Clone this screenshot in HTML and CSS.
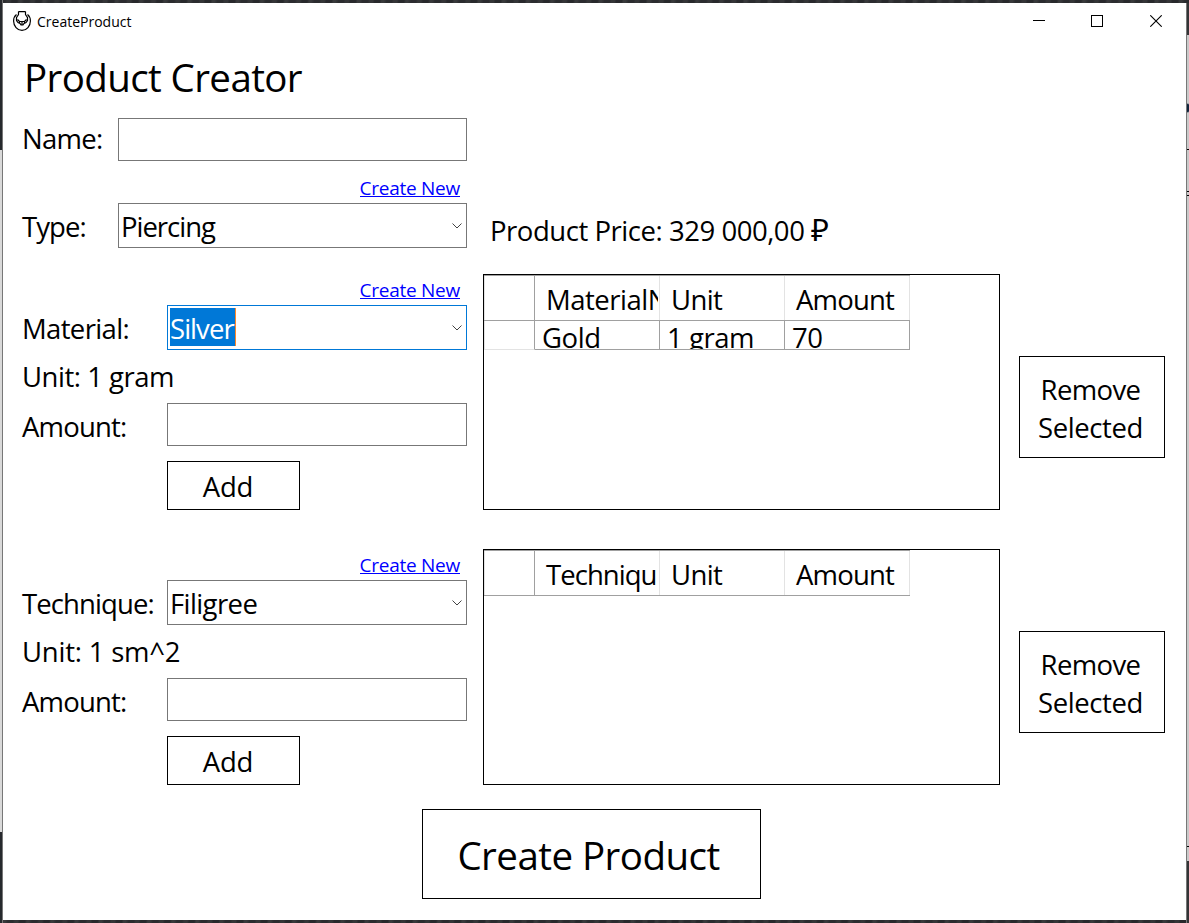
FILE: index.html
```html
<!DOCTYPE html>
<html lang="en">
<head>
<meta charset="utf-8">
<title>CreateProduct</title>
<link rel="stylesheet" href="styles.css">
</head>
<body>
<div class="desktop">
  <div class="strip strip-left"><i class="dark"></i><i class="light"></i><i class="dark"></i></div>
  <div class="window">
    <div class="titlebar">
      <svg class="app-icon" width="18" height="20" viewBox="0 0 18 20" fill="none" stroke="#000" stroke-width="1.2">
        <path d="M5.500.600h7M5.500.600v3L3.500 6.500M12.500.600v3L14.500 6.500"/>
        <path d="M3.500 3.500C1.500 5 .6 7 .6 10c0 5 3.700 9.400 8.400 9.400s8.400-4.400 8.400-9.400c0-3-.9-5-2.900-6.500"/>
        <path d="M3.500 6v3.500L5 11.500L7 12.500L8 14h2L11 12.500L13 11.500L14.500 9.500V6M4.500 8.500L6.500 10.500h5l2-2M6.500 10.500v2M9 10.500v3M11.500 10.500v2"/>
      </svg>
      <span class="caption">CreateProduct</span>
      <div class="controls">
        <svg width="12" height="12" viewBox="0 0 12 12" shape-rendering="crispEdges"><path d="M0 5.500h12" stroke="#000"/></svg>
        <svg width="12" height="12" viewBox="0 0 12 12"><rect x=".5" y=".5" width="11" height="11" fill="none" stroke="#000"/></svg>
        <svg width="12" height="12" viewBox="0 0 12 12"><path d="M.3.300l11.400 11.400M11.700.300L.3 11.700" stroke="#000" stroke-width="1.100"/></svg>
      </div>
    </div>

    <div class="content">
      <h1>Product Creator</h1>

      <div class="top">
        <div class="form">
          <div class="row narrow short"><label class="name">Name:</label><div class="input"></div></div>
          <div class="link-row high"><a>Create New</a></div>
          <div class="row narrow"><label class="tight">Type:</label>
            <div class="combo"><span class="vtight">Piercing</span><svg class="chev" viewBox="0 0 10 6"><path d="M.5.500L5 5L9.500.500"/></svg></div></div>
        </div>
        <div class="price">Product Price: 329 000,00 <span class="ruble">₽</span></div>
      </div>

      <div class="section">
        <div class="form">
          <div class="link-row"><a>Create New</a></div>
          <div class="row"><label>Material:</label>
            <div class="combo focused"><span class="selected">Silver</span><svg class="chev" viewBox="0 0 10 6"><path d="M.5.500L5 5L9.500.500"/></svg></div></div>
          <div class="unit">Unit: 1 gram</div>
          <div class="row short"><label class="amount">Amount:</label><div class="input"></div></div>
          <div class="button add">Add</div>
        </div>
        <div class="grid">
          <div class="tr head"><div class="rh"></div><div class="th"><div class="clip">MaterialN</div></div><div class="th unit-h">Unit</div><div class="th amount-h">Amount</div></div>
          <div class="tr data"><div class="rh"></div><div class="td gold">Gold</div><div class="td">1 gram</div><div class="td">70</div></div>
        </div>
        <div class="button remove"><span class="remove-word">Remove</span><span>Selected</span></div>
      </div>

      <div class="section second">
        <div class="form">
          <div class="link-row"><a>Create New</a></div>
          <div class="row"><label class="technique">Technique:</label>
            <div class="combo"><span class="filigree">Filigree</span><svg class="chev" viewBox="0 0 10 6"><path d="M.5.500L5 5L9.500.500"/></svg></div></div>
          <div class="unit unit-sm">Unit: 1 sm^2</div>
          <div class="row short"><label class="amount">Amount:</label><div class="input"></div></div>
          <div class="button add">Add</div>
        </div>
        <div class="grid">
          <div class="tr head"><div class="rh"></div><div class="th technique-h">Techniqu</div><div class="th unit-h">Unit</div><div class="th amount-h">Amount</div></div>
        </div>
        <div class="button remove"><span class="remove-word">Remove</span><span>Selected</span></div>
      </div>

      <div class="button create">Create Product</div>
    </div>
  </div>
  <div class="strip strip-right"><i class="dark"></i><i class="light a"></i><i class="line"></i><i class="light b"></i><i class="line"></i><i class="light c"></i><i class="line"></i><i class="light d"></i><i class="line"></i><i class="light e"></i><i class="dark"></i></div>
</div>
</body>
</html>
```
FILE: styles.css
```css
* { box-sizing: border-box; }
body {
  margin: 0;
  font: 27.5px "Open Sans", "Noto Sans", sans-serif;
  color: #000;
  overflow: hidden;
}
.desktop {
  display: grid;
  grid-template-columns: 3px 1183px 3px;
  width: 1189px;
  height: 923px;
  padding: 3px 0;
  background: repeating-linear-gradient(97deg, #2b2c2f 0 5px, #343537 7px 10px, #28292c 12px 17px, #38393b 19px 21px, #2b2c2f 24px);
}

/* Desktop edges beside the window */
.strip { display: flex; flex-direction: column; }
.strip-left { border-right: 1px solid #777; margin-top: -3px; }
.strip-left .dark { height: 150px; background: #26292d; }
.strip-left .light { height: 682px; background: #d9d9d9; }
.strip-left .dark:last-child { height: 91px; }
.strip-right { border-left: 1px solid #777; }
.strip-right .dark { height: 32px; background: #333436; }
.strip-right .light { background: #c9c9c9; }
.strip-right .line { height: 1px; background: #000; }
.strip-right .a { height: 114px; background: radial-gradient(circle at 0 73px, #10243c 0 3.5px, #c9c9c9 5px); }
.strip-right .b { height: 41px; }
.strip-right .c { height: 3px; }
.strip-right .d { height: 650px; }
.strip-right .e { height: 14px; }
.strip-right .dark:last-child { height: 62px; }

.window { background: #fff; height: 917px; }
.titlebar { display: flex; align-items: center; height: 37px; padding: 0 24px 0 10px; }
.app-icon { margin-top: -1px; }
.caption { margin-left: 6px; font-size: 14px; line-height: 37px; }
.controls { display: flex; gap: 47px; margin-left: auto; margin-top: -1px; }
.controls svg:first-child { margin-right: -1px; }

.content { padding-left: 19px; }
h1 {
  height: 78px;
  margin: 0;
  padding: 12px 0 0 2px;
  font-size: 38.5px;
  font-weight: 400;
  line-height: 50px;
  letter-spacing: -.6px;
}
.top { display: flex; gap: 16px; height: 156px; align-items: flex-start; }
.section { display: flex; height: 236px; align-items: flex-start; }
.second { margin-top: 39px; }
.form { width: 445px; flex: none; }
.section .form { margin-right: 16px; }

.row { display: flex; height: 45px; }
.row.short { height: 43px; }
.row label { width: 145px; flex: none; line-height: 47px; letter-spacing: -.65px; }
.row.narrow label { width: 96px; }
.row label.name { line-height: 41px; letter-spacing: -.75px; }
.row label.tight { letter-spacing: -.95px; }
.row label.technique { letter-spacing: -.9px; }
.row label.amount { letter-spacing: -.8px; }
.input { flex: 1; height: 43px; border: 1px solid #777; }
.combo {
  display: flex;
  flex: 1;
  justify-content: space-between;
  height: 45px;
  padding: 2px 4px 0 2px;
  border: 1px solid #777;
  line-height: 41px;
}
.combo.focused { border-color: #0078d7; }
.combo span { height: 38px; }
.vtight { letter-spacing: -1.02px; }
.filigree { letter-spacing: -.6px; }
.selected { width: 66px; background: #0078d7; color: #fff; border-right: 1px solid #ff8728; letter-spacing: -.95px; }
.chev { width: 10px; height: 6px; margin-top: 17px; fill: none; stroke: #444; }

.link-row { display: flex; justify-content: flex-end; height: 31px; padding-right: 7px; }
.link-row.high { height: 42px; padding-top: 11px; }
.link-row a {
  height: 25px;
  border-bottom: 1px solid #00f;
  color: #00f;
  font-size: 19px;
  line-height: 32px;
  letter-spacing: -.26px;
}

.unit { height: 53px; line-height: 54px; letter-spacing: -.48px; }
.unit-sm { letter-spacing: -.22px; }
.price { margin: 85px 0 0 7px; line-height: 55px; letter-spacing: -.46px; white-space: nowrap; }
.ruble { font-size: 31px; line-height: 1; }

.button { border: 1px solid #000; text-align: center; }
.add { width: 133px; height: 49px; margin: 15px 0 0 145px; padding-right: 11px; line-height: 49px; letter-spacing: -.2px; }
.remove { display: flex; flex-direction: column; width: 146px; height: 102px; margin: 82px 0 0 19px; padding: 14px 3px 0 0; line-height: 38px; letter-spacing: -.4px; }
.remove-word { letter-spacing: -.63px; }
.create { width: 339px; height: 90px; margin: 24px 0 0 400px; padding-right: 6px; font-size: 38.5px; line-height: 90px; letter-spacing: -.54px; }

/* Data grids */
.grid { width: 517px; height: 236px; border: 1px solid #000; }
.tr { display: grid; grid-template-columns: 51px 125px 125px 125px; }
.tr > div { overflow: hidden; white-space: nowrap; }
.head { width: 426px; height: 46px; border-top: 1px solid #a0a0a0; border-bottom: 1px solid #a0a0a0; }
.head .rh { border-left: 1px solid #e3e3e3; border-right: 1px solid #a0a0a0; }
.th { padding-left: 11px; border-right: 1px solid #e3e3e3; line-height: 48px; letter-spacing: -.5px; }
.clip { width: 112px; overflow: hidden; }
.th.unit-h { letter-spacing: -.62px; }
.th.amount-h { letter-spacing: -.8px; }
.th.technique-h { letter-spacing: -.95px; }
.data { height: 29px; }
.data .rh { border: solid #e3e3e3; border-width: 0 0 1px 1px; border-right: 1px solid #a0a0a0; }
.td { padding-left: 7px; border: solid #a0a0a0; border-width: 0 1px 1px 0; line-height: 34px; letter-spacing: -.45px; }
```
